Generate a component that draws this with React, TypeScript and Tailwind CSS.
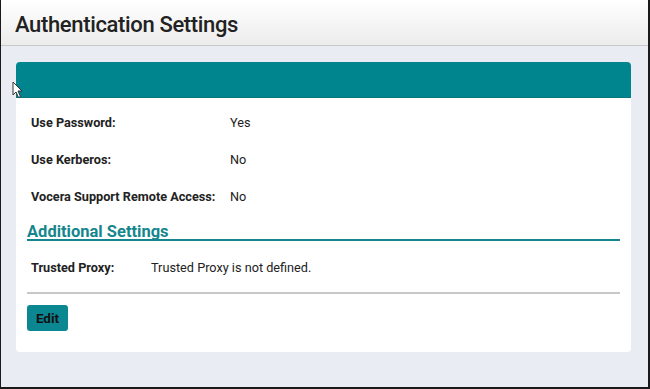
import React from "react";

export default function App() {
  const rows = [
    ["Use Password:", "Yes"],
    ["Use Kerberos:", "No"],
    ["Vocera Support Remote Access:", "No"],
  ];
  return (
    <div
      className="relative w-[650px] h-[389px] overflow-hidden border-l border-r-2 border-b-2 border-[#1a1a1a] bg-[#eaecf4] flex flex-col"
      style={{ fontFamily: "Roboto, 'Liberation Sans', sans-serif" }}
    >
      <div className="h-[46px] shrink-0 bg-gradient-to-b from-white to-[#ececec] border-b border-[#c8c8c8] flex items-center pl-[14px] pt-[5px]">
        <h1 className="text-[22px] font-medium tracking-[-0.35px] text-[#222] leading-none">Authentication Settings</h1>
      </div>
      <div className="pt-[16px] pl-[15px] pr-[17px]">
        <div className="bg-white rounded-[4px] h-[290px] flex flex-col">
          <div className="h-[36px] rounded-t-[4px] bg-[#00858e] border-b border-[#0b757c]" />
          <div className="px-[11px] pt-[6px]">
            {rows.map(([l, v]) => (
              <div key={l} className="h-[37px] flex items-center text-[12.7px] text-[#222] pl-[4px]">
                <div className="w-[199px] font-bold">{l}</div>
                <div>{v}</div>
              </div>
            ))}
            <div className="mt-[9px] border-b-2 border-[#16868e]">
              <h2 className="text-[16.5px] font-bold text-[#16868e] leading-[15px]">Additional Settings</h2>
            </div>
            <div className="h-[51px] flex items-center text-[12.7px] text-[#222] pl-[4px] pt-[3px]">
              <div className="w-[120px] font-bold">Trusted Proxy:</div>
              <div>Trusted Proxy is not defined.</div>
            </div>
            <div className="border-b-2 border-[#c8c8c8]" />
            <div className="pt-[11px]">
              <button className="h-[26px] w-[41px] rounded-[3px] bg-[#0b8791] text-[13.5px] font-bold text-[#111] flex items-center justify-center">
                Edit
              </button>
            </div>
          </div>
        </div>
      </div>
      <svg className="absolute left-[11px] top-[81px]" width="12" height="18" viewBox="0 0 12 18">
        <path d="M1 1 L1 14 L4 11 L6.5 16.5 L8.5 15.5 L6 10 L10 10 Z" fill="white" stroke="#333" strokeWidth="1" />
      </svg>
    </div>
  );
}
